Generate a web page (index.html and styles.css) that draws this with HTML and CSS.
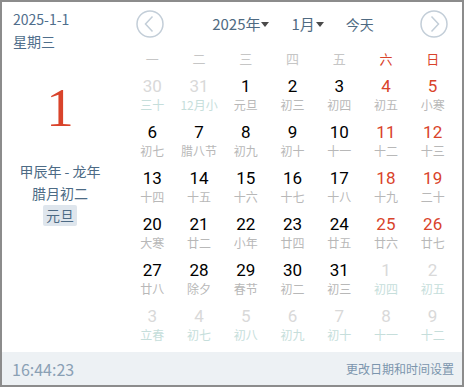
FILE: index.html
```html
<!DOCTYPE html>
<html lang="zh-CN">
<head>
    <meta charset="UTF-8">
    <title>日历</title>
    <link rel="stylesheet" href="styles.css">
</head>
<body>
    <div class="window">
        <div class="main">
            <div class="today-panel">
                <div class="today-date">2025-1-1</div>
                <div class="today-week">星期三</div>
                <div class="today-day">1</div>
                <div class="today-lunar">甲辰年 - 龙年</div>
                <div class="today-lunar">腊月初二</div>
                <span class="today-tag">元旦</span>
            </div>
            <div class="calendar">
                <div class="cal-header">
                    <button class="round-btn">
                        <svg width="28" height="28" viewBox="0 0 28 28"><circle cx="14" cy="14" r="13" fill="none" stroke="#c3ced8" stroke-width="1.5"/><path d="M16.5 6.5 L9.5 14 L16.5 21.5" fill="none" stroke="#c3ced8" stroke-width="1.5"/></svg>
                    </button>
                    <div class="selectors">
                        <span class="select">2025年<i class="caret"></i></span>
                        <span class="select">1月<i class="caret"></i></span>
                        <span class="select today-link">今天</span>
                    </div>
                    <button class="round-btn">
                        <svg width="28" height="28" viewBox="0 0 28 28"><circle cx="14" cy="14" r="13" fill="none" stroke="#c3ced8" stroke-width="1.5"/><path d="M11.5 6.5 L18.5 14 L11.5 21.5" fill="none" stroke="#c3ced8" stroke-width="1.5"/></svg>
                    </button>
                </div>
                <div class="weekdays">
                    <span>一</span><span>二</span><span>三</span><span>四</span><span>五</span><span class="weekend">六</span><span class="weekend">日</span>
                </div>
                <div class="days" id="days"></div>
            </div>
        </div>
        <div class="footer">
            <span class="clock">16:44:23</span>
            <span class="settings">更改日期和时间设置</span>
        </div>
    </div>

    <script>
        // [day, lunar, other month]
        const days = [
            [30, '三十', 1], [31, '12月小', 1], [1, '元旦'], [2, '初三'], [3, '初四'], [4, '初五'], [5, '小寒'],
            [6, '初七'], [7, '腊八节'], [8, '初九'], [9, '初十'], [10, '十一'], [11, '十二'], [12, '十三'],
            [13, '十四'], [14, '十五'], [15, '十六'], [16, '十七'], [17, '十八'], [18, '十九'], [19, '二十'],
            [20, '大寒'], [21, '廿二'], [22, '小年'], [23, '廿四'], [24, '廿五'], [25, '廿六'], [26, '廿七'],
            [27, '廿八'], [28, '除夕'], [29, '春节'], [30, '初二'], [31, '初三'], [1, '初四', 1], [2, '初五', 1],
            [3, '立春', 1], [4, '初七', 1], [5, '初八', 1], [6, '初九', 1], [7, '初十', 1], [8, '十一', 1], [9, '十二', 1]
        ];

        const container = document.getElementById('days');
        days.forEach((d, i) => {
            const cell = document.createElement('div');
            cell.classList.add('day');
            if (d[2]) cell.classList.add('other');
            else if (i % 7 >= 5) cell.classList.add('weekend');

            const num = document.createElement('span');
            num.classList.add('day-num');
            num.textContent = d[0];

            const lunar = document.createElement('span');
            lunar.classList.add('day-lunar');
            lunar.textContent = d[1];

            cell.appendChild(num);
            cell.appendChild(lunar);
            container.appendChild(cell);
        });
    </script>
</body>
</html>
```

FILE: styles.css
```css
* { margin: 0; padding: 0; box-sizing: border-box; }

body {
    font-family: "Noto Sans CJK SC", "Noto Sans", sans-serif;
    background: #ffffff;
}

.window {
    width: 464px;
    height: 387px;
    border: 2px solid #8c8c8c;
    display: flex;
    flex-direction: column;
}

.main {
    display: flex;
    height: 350px;
}

.today-panel {
    width: 116px;
    display: flex;
    flex-direction: column;
    align-items: center;
    padding-top: 6px;
}

.today-date,
.today-week {
    align-self: flex-start;
    padding-left: 11px;
    font-size: 14px;
    line-height: 22px;
    color: #4f6e8c;
}

.today-day {
    font-family: "Liberation Serif", serif;
    font-size: 55px;
    line-height: 64px;
    color: #d9432b;
    margin-top: 24px;
    margin-bottom: 20px;
}

.today-lunar {
    font-size: 14px;
    line-height: 22px;
    color: #4d6b85;
}

.today-tag {
    margin-top: 1px;
    padding: 0 3px;
    font-size: 14px;
    line-height: 21px;
    color: #4d6b85;
    background: #dfe6ed;
    border-radius: 2px;
}

.calendar {
    width: 327px;
    margin-left: 11px;
}

.cal-header {
    display: flex;
    align-items: center;
    justify-content: space-between;
    height: 44px;
    padding: 0 8px 0 7px;
}

.round-btn {
    background: none;
    border: none;
    width: 28px;
    height: 28px;
    display: flex;
    cursor: pointer;
}

.selectors {
    display: flex;
    gap: 22px;
    padding-left: 2px;
}

.select {
    display: flex;
    align-items: center;
    font-size: 15px;
    line-height: 22px;
    color: #4f6a82;
}

.today-link {
    font-size: 14px;
}

.caret {
    display: inline-block;
    margin-left: 1px;
    border-left: 4px solid transparent;
    border-right: 4px solid transparent;
    border-top: 5px solid #4a4a4a;
}

.weekdays {
    display: grid;
    grid-template-columns: repeat(7, 1fr);
    height: 24px;
    margin-bottom: 4px;
    align-items: center;
    text-align: center;
    font-size: 13px;
    color: #c6c6c6;
}

.weekdays .weekend {
    color: #d9432b;
}

.days {
    display: grid;
    grid-template-columns: repeat(7, 1fr);
    grid-auto-rows: 46px;
}

.day {
    display: flex;
    flex-direction: column;
    align-items: center;
    padding-top: 2px;
}

.day-num {
    font-family: Roboto, "Noto Sans", sans-serif;
    font-size: 17px;
    line-height: 20px;
    color: #000000;
}

.day-lunar {
    font-size: 12px;
    line-height: 18px;
    color: #b8b8b8;
}

.day.weekend .day-num {
    color: #d9432b;
}

.day.other .day-num {
    color: #d9d9d9;
}

.day.other .day-lunar {
    color: #c6dedb;
}

.footer {
    display: flex;
    align-items: center;
    justify-content: space-between;
    height: 33px;
    padding: 0 8px 0 10px;
    background: #edf1f4;
}

.clock {
    font-size: 16px;
    color: #8aa0b4;
}

.settings {
    font-size: 12px;
    color: #7b95ad;
}
```
